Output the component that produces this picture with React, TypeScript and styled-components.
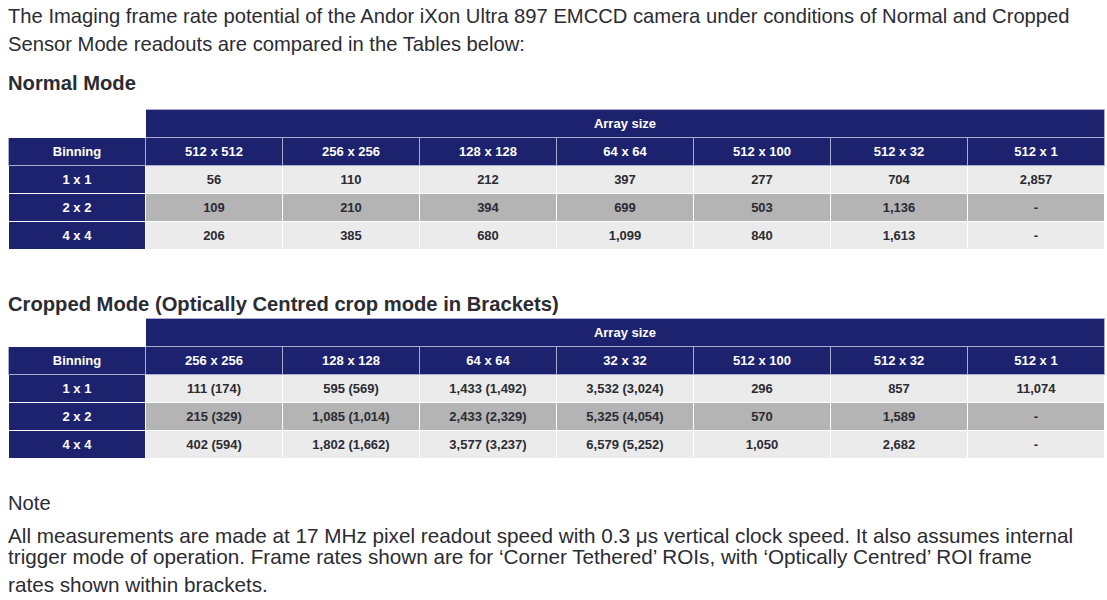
import styled, { createGlobalStyle } from 'styled-components';

const GlobalStyle = createGlobalStyle`
    body {
        margin: 0;
        background: #ffffff;
        font-family: 'Liberation Sans', Arial, sans-serif;
        color: #2b2b33;
    }
`;

const Page = styled.div`
    padding: 2px 8px 0 8px;
    width: 1097px;
`;

const Intro = styled.p`
    margin: 0;
    font-size: 20.2px;
    line-height: 28px;
`;

const SectionTitle = styled.h2<{ $top: number; $bottom: number }>`
    margin: ${(p) => p.$top}px 0 ${(p) => p.$bottom}px 0;
    font-size: 20.2px;
    font-weight: 700;
    line-height: 24px;
`;

const Table = styled.table`
    width: 1097px;
    table-layout: fixed;
    border-collapse: collapse;
    font-size: 13px;
    font-weight: 700;
    text-align: center;
`;

const Cell = styled.td<{ $shade?: 'light' | 'dark' | 'navy' }>`
    height: 27px;
    padding: 0;
    border: 1px solid #ffffff;
    background: ${(p) =>
        p.$shade === 'navy'
            ? '#1d226f'
            : p.$shade === 'dark'
            ? '#b4b4b5'
            : '#ebebec'};
    color: ${(p) => (p.$shade === 'navy' ? '#ffffff' : '#2b2b33')};
`;

const HeadCell = styled.th<{ $blank?: boolean }>`
    height: 27px;
    padding: 0;
    font-weight: 700;
    color: #ffffff;
    background: ${(p) => (p.$blank ? '#ffffff' : '#1d226f')};
    border: 1px solid ${(p) => (p.$blank ? '#ffffff' : '#a9acd0')};
`;

const NoteTitle = styled.div`
    margin-top: 32px;
    font-size: 20.2px;
    line-height: 24px;
`;

const NoteText = styled.p`
    margin: 10px 0 0 0;
    font-size: 20.7px;
    line-height: 21px;
`;

const LastLine = styled.span`
    display: block;
    margin-top: 7px;
`;

type TableData = {
    sizes: string[];
    rows: { bin: string; values: string[] }[];
};

const normal: TableData = {
    sizes: ['512 x 512', '256 x 256', '128 x 128', '64 x 64', '512 x 100', '512 x 32', '512 x 1'],
    rows: [
        { bin: '1 x 1', values: ['56', '110', '212', '397', '277', '704', '2,857'] },
        { bin: '2 x 2', values: ['109', '210', '394', '699', '503', '1,136', '-'] },
        { bin: '4 x 4', values: ['206', '385', '680', '1,099', '840', '1,613', '-'] },
    ],
};

const cropped: TableData = {
    sizes: ['256 x 256', '128 x 128', '64 x 64', '32 x 32', '512 x 100', '512 x 32', '512 x 1'],
    rows: [
        {
            bin: '1 x 1',
            values: ['111 (174)', '595 (569)', '1,433 (1,492)', '3,532 (3,024)', '296', '857', '11,074'],
        },
        {
            bin: '2 x 2',
            values: ['215 (329)', '1,085 (1,014)', '2,433 (2,329)', '5,325 (4,054)', '570', '1,589', '-'],
        },
        {
            bin: '4 x 4',
            values: ['402 (594)', '1,802 (1,662)', '3,577 (3,237)', '6,579 (5,252)', '1,050', '2,682', '-'],
        },
    ],
};

const RateTable = ({ data }: { data: TableData }) => (
    <Table>
        <thead>
            <tr>
                <HeadCell $blank />
                <HeadCell colSpan={7}>Array size</HeadCell>
            </tr>
            <tr>
                <HeadCell>Binning</HeadCell>
                {data.sizes.map((s) => (
                    <HeadCell key={s}>{s}</HeadCell>
                ))}
            </tr>
        </thead>
        <tbody>
            {data.rows.map((row, i) => (
                <tr key={row.bin}>
                    <Cell $shade="navy">{row.bin}</Cell>
                    {row.values.map((v, j) => (
                        <Cell key={j} $shade={i === 1 ? 'dark' : 'light'}>
                            {v}
                        </Cell>
                    ))}
                </tr>
            ))}
        </tbody>
    </Table>
);

const App = () => {
    return (
        <>
            <GlobalStyle />
            <Page>
                <Intro>
                    The Imaging frame rate potential of the Andor iXon Ultra 897 EMCCD camera under
                    conditions of Normal and Cropped
                    <br />
                    Sensor Mode readouts are compared in the Tables below:
                </Intro>
                <SectionTitle $top={13} $bottom={14}>
                    Normal Mode
                </SectionTitle>
                <RateTable data={normal} />
                <SectionTitle $top={42} $bottom={2}>
                    Cropped Mode (Optically Centred crop mode in Brackets)
                </SectionTitle>
                <RateTable data={cropped} />
                <NoteTitle>Note</NoteTitle>
                <NoteText>
                    All measurements are made at 17 MHz pixel readout speed with 0.3 μs vertical
                    clock speed. It also assumes internal
                    <br />
                    trigger mode of operation. Frame rates shown are for ‘Corner Tethered’ ROIs,
                    with ‘Optically Centred’ ROI frame
                    <LastLine>rates shown within brackets.</LastLine>
                </NoteText>
            </Page>
        </>
    );
};

export default App;
